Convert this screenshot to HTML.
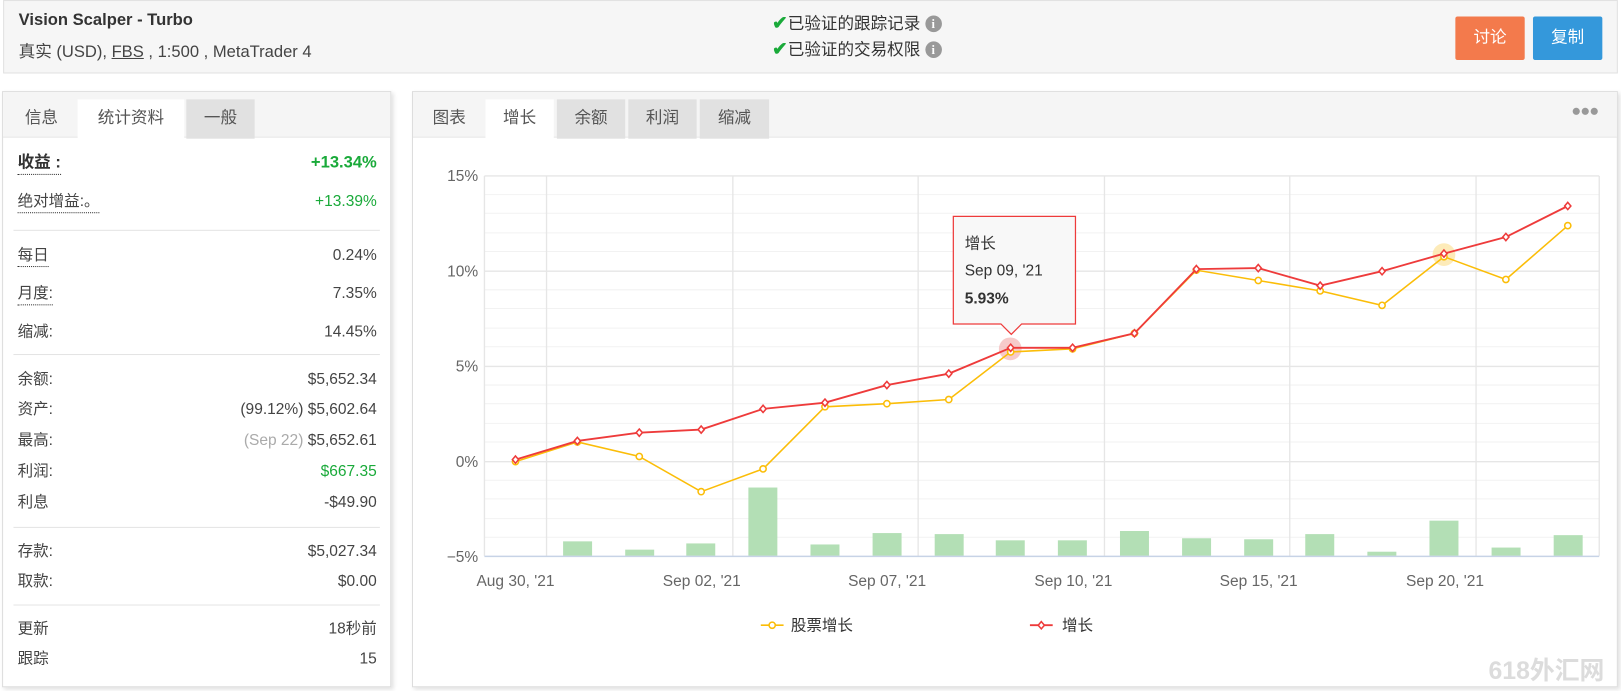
<!DOCTYPE html>
<html><head><meta charset="utf-8"><style>
*{margin:0;padding:0;box-sizing:border-box}
html,body{width:1621px;height:691px;overflow:hidden;background:#fff}
body{font-family:"Liberation Sans","Noto Sans CJK SC",sans-serif;color:#333}
#w{position:absolute;left:0;top:0;width:1566px;height:668px;transform:scale(1.0351);transform-origin:0 0}
.a{position:absolute}
.hdr{left:3px;top:0;width:1560px;height:71px;background:#f6f6f6;border:1px solid #e2e2e2}
.panel{background:#fff;border:1px solid #ddd;box-shadow:2px 2px 4px rgba(0,0,0,.12)}
.tabs{position:absolute;left:0;top:0;right:0;height:44px;background:#f5f5f5;border-bottom:1px solid #e6e6e6}
.tab{position:absolute;top:7px;height:38px;line-height:37px;text-align:center;font-size:16px;color:#555}
.tab.on{background:#fff}
.tab.g{background:#e1e1e1}
.row{position:absolute;left:14px;right:13px;font-size:15px;color:#444;height:20px;line-height:20px}
.row .l{position:absolute;left:0}
.row .l.d{border-bottom:1px dotted #333}
.row .r{position:absolute;right:0}
.sep{position:absolute;left:10px;right:10px;height:1px;background:#e4e4e4}
.btn{position:absolute;top:16px;height:42px;line-height:42px;color:#fff;font-size:16px;text-align:center;border-radius:2px}
.ck{color:#1aaa3a;font-weight:bold;font-size:18px}
.ic{display:inline-block;width:16px;height:16px;border-radius:8px;background:#999;color:#fff;font-size:12px;line-height:16px;text-align:center;font-weight:bold;font-family:'Liberation Serif',serif;vertical-align:1px}
</style></head><body><div id="w">
<div class="a hdr"></div>
<div class="a" style="left:18px;top:11px;font-size:16px;font-weight:bold;color:#333">Vision Scalper - Turbo</div>
<div class="a" style="left:18px;top:36px;font-size:16px;color:#444">真实 (USD), <span style="text-decoration:underline">FBS</span> , 1:500 , MetaTrader 4</div>
<div class="a" style="left:746px;top:9px;font-size:16px;color:#333"><span class="ck">✔</span>已验证的跟踪记录 <span class="ic">i</span></div>
<div class="a" style="left:746px;top:34px;font-size:16px;color:#333"><span class="ck">✔</span>已验证的交易权限 <span class="ic">i</span></div>
<div class="btn" style="left:1406px;width:67px;background:#f37a4c">讨论</div>
<div class="btn" style="left:1481px;width:67px;background:#3498db">复制</div>

<div class="a panel" style="left:2px;top:88px;width:376px;height:576px">
<div class="tabs">
<div class="tab" style="left:4px;width:66px">信息</div>
<div class="tab on" style="left:72px;width:103px">统计资料</div>
<div class="tab g" style="left:177px;width:66px">一般</div>
</div>
<div class="row" style="top:59px;font-size:16px"><span class="l d" style="font-weight:bold;color:#333">收益 :</span><span class="r" style="color:#1aaa3a;font-weight:bold">+13.34%</span></div>
<div class="row" style="top:96px"><span class="l d">绝对增益:。</span><span class="r" style="color:#1aaa3a">+13.39%</span></div>
<div class="sep" style="top:133px"></div>
<div class="row" style="top:148px"><span class="l d">每日</span><span class="r">0.24%</span></div>
<div class="row" style="top:185px"><span class="l d">月度:</span><span class="r">7.35%</span></div>
<div class="row" style="top:222px"><span class="l">缩减:</span><span class="r">14.45%</span></div>
<div class="sep" style="top:253px"></div>
<div class="row" style="top:268px"><span class="l">余额:</span><span class="r">$5,652.34</span></div>
<div class="row" style="top:297px"><span class="l">资产:</span><span class="r">(99.12%) $5,602.64</span></div>
<div class="row" style="top:327px"><span class="l">最高:</span><span class="r"><span style="color:#aaa">(Sep 22)</span> $5,652.61</span></div>
<div class="row" style="top:357px"><span class="l">利润:</span><span class="r" style="color:#1aaa3a">$667.35</span></div>
<div class="row" style="top:387px"><span class="l">利息</span><span class="r">-$49.90</span></div>
<div class="sep" style="top:420px"></div>
<div class="row" style="top:434px"><span class="l">存款:</span><span class="r">$5,027.34</span></div>
<div class="row" style="top:463px"><span class="l">取款:</span><span class="r">$0.00</span></div>
<div class="sep" style="top:495px"></div>
<div class="row" style="top:509px"><span class="l">更新</span><span class="r">18秒前</span></div>
<div class="row" style="top:538px"><span class="l">跟踪</span><span class="r">15</span></div>
</div>

<div class="a panel" style="left:398px;top:88px;width:1165px;height:576px">
<div class="tabs">
<div class="tab" style="left:2px;width:66px">图表</div>
<div class="tab on" style="left:70px;width:66px">增长</div>
<div class="tab g" style="left:139px;width:66px">余额</div>
<div class="tab g" style="left:208px;width:66px">利润</div>
<div class="tab g" style="left:277px;width:67px">缩减</div>
<div style="position:absolute;right:18px;top:10px;color:#999;font-size:16px;letter-spacing:-1px">●●●</div>
</div>
</div>

<svg class="a" style="left:0;top:0" width="1566" height="668" font-family="Liberation Sans, Noto Sans CJK SC, sans-serif">
<g stroke="#f2f2f2" stroke-width="1">
<line x1="468" x2="1545" y1="188" y2="188"/><line x1="468" x2="1545" y1="206" y2="206"/><line x1="468" x2="1545" y1="225" y2="225"/><line x1="468" x2="1545" y1="243" y2="243"/>
<line x1="468" x2="1545" y1="280" y2="280"/><line x1="468" x2="1545" y1="298" y2="298"/><line x1="468" x2="1545" y1="317" y2="317"/><line x1="468" x2="1545" y1="335" y2="335"/>
<line x1="468" x2="1545" y1="372" y2="372"/><line x1="468" x2="1545" y1="390" y2="390"/><line x1="468" x2="1545" y1="409" y2="409"/><line x1="468" x2="1545" y1="427" y2="427"/>
<line x1="468" x2="1545" y1="464" y2="464"/><line x1="468" x2="1545" y1="482" y2="482"/><line x1="468" x2="1545" y1="501" y2="501"/><line x1="468" x2="1545" y1="519" y2="519"/>
</g>
<g stroke="#e6e6e6" stroke-width="1.3">
<line x1="468" x2="1545" y1="170" y2="170"/><line x1="468" x2="1545" y1="262" y2="262"/><line x1="468" x2="1545" y1="354" y2="354"/><line x1="468" x2="1545" y1="446" y2="446"/>
<line x1="468" x2="468" y1="170" y2="537"/><line x1="1545" x2="1545" y1="170" y2="537"/>
<line x1="528" x2="528" y1="170" y2="537"/><line x1="708" x2="708" y1="170" y2="537"/><line x1="887" x2="887" y1="170" y2="537"/><line x1="1067" x2="1067" y1="170" y2="537"/><line x1="1246" x2="1246" y1="170" y2="537"/><line x1="1426" x2="1426" y1="170" y2="537"/>
</g>
<g fill="#b3dfb5">
<rect x="544" y="523" width="28" height="14"/><rect x="604" y="531" width="28" height="6"/><rect x="663" y="525" width="28" height="12"/><rect x="723" y="471" width="28" height="66"/><rect x="783" y="526" width="28" height="11"/><rect x="843" y="515" width="28" height="22"/><rect x="903" y="516" width="28" height="21"/><rect x="962" y="522" width="28" height="15"/><rect x="1022" y="522" width="28" height="15"/><rect x="1082" y="513" width="28" height="24"/><rect x="1142" y="520" width="28" height="17"/><rect x="1202" y="521" width="28" height="16"/><rect x="1261" y="516" width="28" height="21"/><rect x="1321" y="533" width="28" height="4"/><rect x="1381" y="503" width="28" height="34"/><rect x="1441" y="529" width="28" height="8"/><rect x="1501" y="517" width="28" height="20"/>
</g>
<line x1="468" x2="1545" y1="537.5" y2="537.5" stroke="#c7d3e6" stroke-width="1.5"/>
<g fill="#666" font-size="15" text-anchor="end">
<text x="462" y="175">15%</text><text x="462" y="267">10%</text><text x="462" y="359">5%</text><text x="462" y="451">0%</text><text x="462" y="543">−5%</text>
</g>
<g fill="#666" font-size="15" text-anchor="middle">
<text x="498" y="566">Aug 30, '21</text><text x="678" y="566">Sep 02, '21</text><text x="857" y="566">Sep 07, '21</text><text x="1037" y="566">Sep 10, '21</text><text x="1216" y="566">Sep 15, '21</text><text x="1396" y="566">Sep 20, '21</text>
</g>
<circle cx="976" cy="337" r="11" fill="#f4b4b4" opacity=".7"/>
<circle cx="1395" cy="246" r="11" fill="#fde6a8" opacity=".8"/>
<polyline fill="none" stroke="#fbbd08" stroke-width="1.5" points="498,446 557.8,427 617.6,441 677.4,475 737.2,453 797,393 856.8,390 916.6,386 976.4,340 1036.2,337 1096,322 1155.8,261 1215.6,271 1275.4,281 1335.2,295 1395,248 1454.8,270 1514.6,218"/>
<g fill="#fff" stroke="#fbbd08" stroke-width="1.5">
<circle cx="498" cy="446" r="3"/><circle cx="557.8" cy="427" r="3"/><circle cx="617.6" cy="441" r="3"/><circle cx="677.4" cy="475" r="3"/><circle cx="737.2" cy="453" r="3"/><circle cx="797" cy="393" r="3"/><circle cx="856.8" cy="390" r="3"/><circle cx="916.6" cy="386" r="3"/><circle cx="976.4" cy="340" r="3"/><circle cx="1036.2" cy="337" r="3"/><circle cx="1096" cy="322" r="3"/><circle cx="1155.8" cy="261" r="3"/><circle cx="1215.6" cy="271" r="3"/><circle cx="1275.4" cy="281" r="3"/><circle cx="1335.2" cy="295" r="3"/><circle cx="1395" cy="248" r="3"/><circle cx="1454.8" cy="270" r="3"/><circle cx="1514.6" cy="218" r="3"/>
</g>
<polyline fill="none" stroke="#ee3b3b" stroke-width="1.8" points="498,444 557.8,426 617.6,418 677.4,415 737.2,395 797,389 856.8,372 916.6,361 976.4,336 1036.2,336 1096,322 1155.8,260 1215.6,259 1275.4,276 1335.2,262 1395,245 1454.8,229 1514.6,199"/>
<g fill="#fff" stroke="#ee3b3b" stroke-width="1.5">
<path d="M498 440.5l3 3.5-3 3.5-3-3.5z"/><path d="M557.8 422.5l3 3.5-3 3.5-3-3.5z"/><path d="M617.6 414.5l3 3.5-3 3.5-3-3.5z"/><path d="M677.4 411.5l3 3.5-3 3.5-3-3.5z"/><path d="M737.2 391.5l3 3.5-3 3.5-3-3.5z"/><path d="M797 385.5l3 3.5-3 3.5-3-3.5z"/><path d="M856.8 368.5l3 3.5-3 3.5-3-3.5z"/><path d="M916.6 357.5l3 3.5-3 3.5-3-3.5z"/><path d="M976.4 332.5l3 3.5-3 3.5-3-3.5z"/><path d="M1036.2 332.5l3 3.5-3 3.5-3-3.5z"/><path d="M1096 318.5l3 3.5-3 3.5-3-3.5z"/><path d="M1155.8 256.5l3 3.5-3 3.5-3-3.5z"/><path d="M1215.6 255.5l3 3.5-3 3.5-3-3.5z"/><path d="M1275.4 272.5l3 3.5-3 3.5-3-3.5z"/><path d="M1335.2 258.5l3 3.5-3 3.5-3-3.5z"/><path d="M1395 241.5l3 3.5-3 3.5-3-3.5z"/><path d="M1454.8 225.5l3 3.5-3 3.5-3-3.5z"/><path d="M1514.6 195.5l3 3.5-3 3.5-3-3.5z"/>
</g>
<path d="M921 209h118v104h-52l-10 10-10-10h-46z" fill="#f8f8f8" stroke="#ee3b3b" stroke-width="1.2"/>
<text x="932" y="240" font-size="15" fill="#333">增长</text>
<text x="932" y="266" font-size="15" fill="#333">Sep 09, '21</text>
<text x="932" y="293" font-size="15" fill="#333" font-weight="bold">5.93%</text>
<line x1="735" x2="757" y1="604" y2="604" stroke="#fbbd08" stroke-width="1.5"/><circle cx="746" cy="604" r="3" fill="#fff" stroke="#fbbd08" stroke-width="1.5"/>
<text x="764" y="609" font-size="15" fill="#333">股票增长</text>
<line x1="995" x2="1017" y1="604" y2="604" stroke="#ee3b3b" stroke-width="1.8"/><path d="M1006 600.5l3 3.5-3 3.5-3-3.5z" fill="#fff" stroke="#ee3b3b" stroke-width="1.5"/>
<text x="1026" y="609" font-size="15" fill="#333">增长</text>
<text x="1438" y="656" font-size="24" font-weight="bold" fill="#dcdcdc">618外汇网</text>
</svg>
</div></body></html>
